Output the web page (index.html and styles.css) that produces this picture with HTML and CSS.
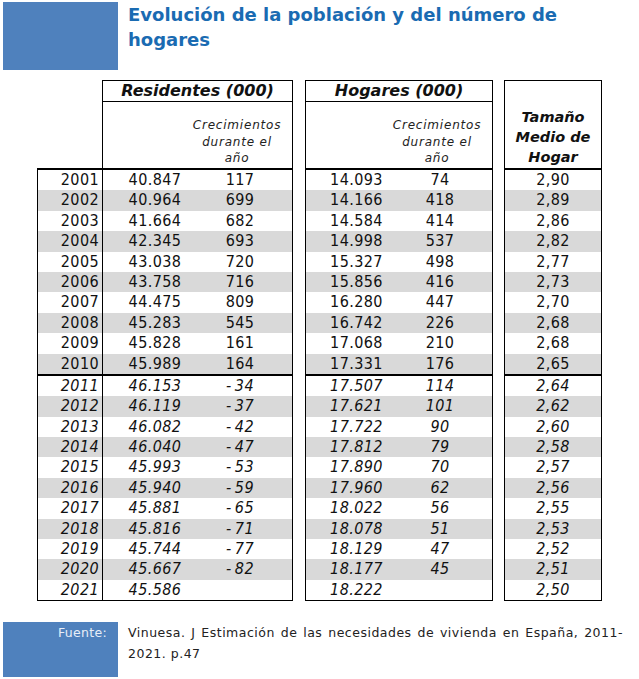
FILE: index.html
```html
<!DOCTYPE html>
<html lang="es">
<head>
<meta charset="utf-8">
<title>Evolución de la población y del número de hogares</title>
<link rel="stylesheet" href="styles.css">
</head>
<body>
<header class="top">
  <div class="blue top-blue"></div>
  <h1 class="title">Evolución de la población y del número de hogares</h1>
</header>

<section class="tables">
  <div class="blk b1">
    <div class="hd">
      <div class="spacer"></div>
      <div class="hbox hbox1">
        <div class="htitle">Residentes (000)</div>
        <div class="sub"><span class="subtxt s1">Crecimientos durante el año</span></div>
      </div>
    </div>
    <div class="body">
      <div class="row"><span class="yr">2001</span><span class="v">40.847</span><span class="g">117</span></div>
      <div class="row"><span class="yr">2002</span><span class="v">40.964</span><span class="g">699</span></div>
      <div class="row"><span class="yr">2003</span><span class="v">41.664</span><span class="g">682</span></div>
      <div class="row"><span class="yr">2004</span><span class="v">42.345</span><span class="g">693</span></div>
      <div class="row"><span class="yr">2005</span><span class="v">43.038</span><span class="g">720</span></div>
      <div class="row"><span class="yr">2006</span><span class="v">43.758</span><span class="g">716</span></div>
      <div class="row"><span class="yr">2007</span><span class="v">44.475</span><span class="g">809</span></div>
      <div class="row"><span class="yr">2008</span><span class="v">45.283</span><span class="g">545</span></div>
      <div class="row"><span class="yr">2009</span><span class="v">45.828</span><span class="g">161</span></div>
      <div class="row"><span class="yr">2010</span><span class="v">45.989</span><span class="g">164</span></div>
      <div class="row proj first"><span class="yr">2011</span><span class="v">46.153</span><span class="g">-&thinsp;34</span></div>
      <div class="row proj"><span class="yr">2012</span><span class="v">46.119</span><span class="g">-&thinsp;37</span></div>
      <div class="row proj"><span class="yr">2013</span><span class="v">46.082</span><span class="g">-&thinsp;42</span></div>
      <div class="row proj"><span class="yr">2014</span><span class="v">46.040</span><span class="g">-&thinsp;47</span></div>
      <div class="row proj"><span class="yr">2015</span><span class="v">45.993</span><span class="g">-&thinsp;53</span></div>
      <div class="row proj"><span class="yr">2016</span><span class="v">45.940</span><span class="g">-&thinsp;59</span></div>
      <div class="row proj"><span class="yr">2017</span><span class="v">45.881</span><span class="g">-&thinsp;65</span></div>
      <div class="row proj"><span class="yr">2018</span><span class="v">45.816</span><span class="g">-&thinsp;71</span></div>
      <div class="row proj"><span class="yr">2019</span><span class="v">45.744</span><span class="g">-&thinsp;77</span></div>
      <div class="row proj"><span class="yr">2020</span><span class="v">45.667</span><span class="g">-&thinsp;82</span></div>
      <div class="row proj"><span class="yr">2021</span><span class="v">45.586</span><span class="g"></span></div>
    </div>
  </div>

  <div class="blk b2">
    <div class="hd">
      <div class="hbox hbox2">
        <div class="htitle">Hogares (000)</div>
        <div class="sub"><span class="subtxt s2">Crecimientos durante el año</span></div>
      </div>
    </div>
    <div class="body">
      <div class="row"><span class="v">14.093</span><span class="g">74</span></div>
      <div class="row"><span class="v">14.166</span><span class="g">418</span></div>
      <div class="row"><span class="v">14.584</span><span class="g">414</span></div>
      <div class="row"><span class="v">14.998</span><span class="g">537</span></div>
      <div class="row"><span class="v">15.327</span><span class="g">498</span></div>
      <div class="row"><span class="v">15.856</span><span class="g">416</span></div>
      <div class="row"><span class="v">16.280</span><span class="g">447</span></div>
      <div class="row"><span class="v">16.742</span><span class="g">226</span></div>
      <div class="row"><span class="v">17.068</span><span class="g">210</span></div>
      <div class="row"><span class="v">17.331</span><span class="g">176</span></div>
      <div class="row proj first"><span class="v">17.507</span><span class="g">114</span></div>
      <div class="row proj"><span class="v">17.621</span><span class="g">101</span></div>
      <div class="row proj"><span class="v">17.722</span><span class="g">90</span></div>
      <div class="row proj"><span class="v">17.812</span><span class="g">79</span></div>
      <div class="row proj"><span class="v">17.890</span><span class="g">70</span></div>
      <div class="row proj"><span class="v">17.960</span><span class="g">62</span></div>
      <div class="row proj"><span class="v">18.022</span><span class="g">56</span></div>
      <div class="row proj"><span class="v">18.078</span><span class="g">51</span></div>
      <div class="row proj"><span class="v">18.129</span><span class="g">47</span></div>
      <div class="row proj"><span class="v">18.177</span><span class="g">45</span></div>
      <div class="row proj"><span class="v">18.222</span><span class="g"></span></div>
    </div>
  </div>

  <div class="blk b3">
    <div class="hd">
      <div class="hbox hbox3">
        <div class="tam">Tamaño<br>Medio de<br>Hogar</div>
      </div>
    </div>
    <div class="body">
      <div class="row"><span class="v">2,90</span></div>
      <div class="row"><span class="v">2,89</span></div>
      <div class="row"><span class="v">2,86</span></div>
      <div class="row"><span class="v">2,82</span></div>
      <div class="row"><span class="v">2,77</span></div>
      <div class="row"><span class="v">2,73</span></div>
      <div class="row"><span class="v">2,70</span></div>
      <div class="row"><span class="v">2,68</span></div>
      <div class="row"><span class="v">2,68</span></div>
      <div class="row"><span class="v">2,65</span></div>
      <div class="row proj first"><span class="v">2,64</span></div>
      <div class="row proj"><span class="v">2,62</span></div>
      <div class="row proj"><span class="v">2,60</span></div>
      <div class="row proj"><span class="v">2,58</span></div>
      <div class="row proj"><span class="v">2,57</span></div>
      <div class="row proj"><span class="v">2,56</span></div>
      <div class="row proj"><span class="v">2,55</span></div>
      <div class="row proj"><span class="v">2,53</span></div>
      <div class="row proj"><span class="v">2,52</span></div>
      <div class="row proj"><span class="v">2,51</span></div>
      <div class="row proj"><span class="v">2,50</span></div>
    </div>
  </div>
</section>

<footer class="src">
  <div class="blue lbl">Fuente:</div>
  <p class="ref">Vinuesa. J Estimación de las necesidades de vivienda en España, 2011-<wbr>2021. p.47</p>
</footer>
</body>
</html>
```
FILE: styles.css
```css
* { box-sizing: border-box; }

body {
  margin: 0;
  background: #fff;
  color: #000;
  font-family: "DejaVu Sans", Verdana, sans-serif;
}

.blue { background: #4f81bd; }

/* ---------- title ---------- */
.top {
  display: flex;
  gap: 10px;
  padding: 2px 0 0 3px;
}
.top-blue {
  flex: none;
  width: 115px;
  height: 68px;
}
.title {
  margin: 0;
  width: 480px;
  font: bold 18px/25px "DejaVu Sans", Verdana, sans-serif;
  color: #1a6bb2;
}

/* ---------- tables ---------- */
.tables {
  display: flex;
  margin: 10px 0 0 37px;
}
.b2 { margin-left: 12px; }
.b3 { margin-left: 11px; }

.blk { display: flex; flex-direction: column; }

.hd { display: flex; height: 88px; }
.spacer { width: 65px; flex: none; }

.hbox {
  display: flex;
  flex-direction: column;
  border: 1px solid #000;
  border-bottom: 0;
}
.hbox1 { width: 191px; }
.hbox2 { width: 188px; }
.hbox3 { width: 98px; justify-content: flex-end; }

.htitle {
  height: 21px;
  border-bottom: 1px solid #000;
  text-align: center;
  font: italic bold 16px/20px "DejaVu Sans", Verdana, sans-serif;
  color: #111;
}
.sub {
  flex: 1;
  display: flex;
  align-items: flex-end;
  padding-bottom: 1px;
}
.subtxt {
  width: 94px;
  text-align: center;
  font: italic 12px/16.7px "DejaVu Sans", Verdana, sans-serif;
  letter-spacing: 0.8px;
  color: #222;
}
.s1 { margin-left: 87px; }
.s2 { margin-left: 84px; }

.tam {
  text-align: center;
  font: italic bold 14.5px/20px "DejaVu Sans", Verdana, sans-serif;
  padding-bottom: 1px;
  color: #111;
}

.body {
  border: 1px solid #000;
  border-top: 2px solid #000;
  font: 16px/20.4px "DejaVu Sans Condensed", "DejaVu Sans", sans-serif;
  letter-spacing: 0.4px;
  color: #111;
}
.b1 .body { width: 256px; }
.b2 .body { width: 188px; }
.b3 .body { width: 98px; }

.row {
  display: grid;
  height: 20.4px;
}
.row:nth-child(even) { background: #d9d9d9; }
.row.proj { font-style: italic; }
.row.first {
  border-top: 2px solid #000;
  height: 22.4px;
}

.b1 .row { grid-template-columns: 65px 104px 85px; }
.b2 .row { grid-template-columns: 101px 85px; }
.b3 .row { grid-template-columns: 96px; }

.yr {
  border-right: 1px solid #000;
  text-align: right;
  padding-right: 3px;
}
.v { text-align: center; }
.g { text-align: center; padding-right: 19px; }

/* ---------- source ---------- */
.src {
  display: flex;
  gap: 10px;
  margin-top: 21px;
  padding-left: 3px;
}
.lbl {
  flex: none;
  width: 115px;
  height: 55px;
  padding-right: 11px;
  text-align: right;
  color: #e8eef7;
  font: 12.5px/21px "DejaVu Sans", Verdana, sans-serif;
  letter-spacing: 0.3px;
}
.ref {
  margin: 0;
  width: 495px;
  text-align: justify;
  color: #222;
  font: 12.5px/21px "DejaVu Sans", Verdana, sans-serif;
  letter-spacing: 0.5px;
}
```
